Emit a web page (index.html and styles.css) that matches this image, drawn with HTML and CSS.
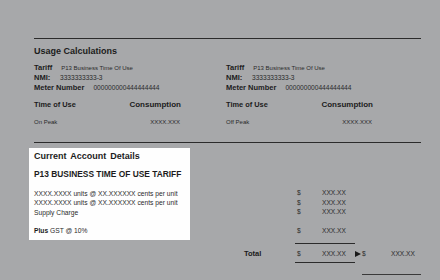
FILE: index.html
```html
<!DOCTYPE html>
<html lang="en">
<head>
<meta charset="utf-8">
<title>Usage Calculations</title>
<link rel="stylesheet" href="styles.css">
</head>
<body>
<div class="page">
  <div class="rule"></div>
  <section class="usage">
    <h2 class="usage-title">Usage Calculations</h2>
    <div class="cols">
      <div class="col">
        <div class="meta-row"><span class="k">Tariff</span><span class="v">P13 Business Time Of Use</span></div>
        <div class="meta-row"><span class="k">NMI:</span><span class="v num">3333333333-3</span></div>
        <div class="meta-row"><span class="k">Meter Number</span><span class="v num">000000000444444444</span></div>
        <div class="tou-head"><span>Time of Use</span><span>Consumption</span></div>
        <div class="tou-row"><span>On Peak</span><span class="num">XXXX.XXX</span></div>
      </div>
      <div class="col">
        <div class="meta-row"><span class="k">Tariff</span><span class="v">P13 Business Time Of Use</span></div>
        <div class="meta-row"><span class="k">NMI:</span><span class="v num">3333333333-3</span></div>
        <div class="meta-row"><span class="k">Meter Number</span><span class="v num">000000000444444444</span></div>
        <div class="tou-head"><span>Time of Use</span><span>Consumption</span></div>
        <div class="tou-row"><span>Off Peak</span><span class="num">XXXX.XXX</span></div>
      </div>
    </div>
  </section>
  <div class="rule"></div>
  <section class="account">
    <div class="card">
      <h3 class="card-title">Current Account Details</h3>
      <div class="card-sub">P13 BUSINESS TIME OF USE TARIFF</div>
      <div class="lines">
        <div>XXXX.XXXX units @ XX.XXXXXX cents per unit</div>
        <div>XXXX.XXXX units @ XX.XXXXXX cents per unit</div>
        <div>Supply Charge</div>
      </div>
      <div class="gst"><b>Plus</b> GST @ 10%</div>
    </div>
    <div class="charges">
      <div class="crow first"><span></span><span>$</span><span>XXX.XX</span></div>
      <div class="crow"><span></span><span>$</span><span>XXX.XX</span></div>
      <div class="crow"><span></span><span>$</span><span>XXX.XX</span></div>
      <div class="crow gap"><span></span><span>$</span><span>XXX.XX</span></div>
      <div class="crow"><span class="sub-line"></span></div>
      <div class="crow total"><span class="total-label">Total</span><span>$</span><span>XXX.XX</span><span class="arrow"><svg width="6" height="6" viewBox="0 0 6 6"><polygon points="0,0 6,3 0,6" fill="#1a1a1a"/></svg></span><span>$</span><span>XXX.XX</span></div>
      <div class="crow"><span class="sub-line below"></span></div>
      <div class="crow"><span class="due-line"></span></div>
    </div>
  </section>
</div>
</body>
</html>
```
FILE: styles.css
```css
* { box-sizing: border-box; }
html, body { margin: 0; padding: 0; }
body {
  background: #a7a8aa;
  width: 440px;
  height: 280px;
  overflow: hidden;
  font-family: "Liberation Sans", Arial, sans-serif;
  color: #1c1c1c;
}
.page {
  padding: 38px 19px 0 34px;
}
.rule {
  border-top: 1px solid #2b2b2b;
  height: 0;
}
.usage-title {
  margin: 6px 0 0;
  font-size: 9px;
  line-height: 12px;
  font-weight: 700;
}
.cols {
  display: grid;
  grid-template-columns: 192px 1fr;
  margin-top: 6px;
}
.col { width: 147px; }
.meta-row {
  display: flex;
  align-items: baseline;
  line-height: 10px;
  height: 10px;
}
.k {
  font-weight: 700;
  font-size: 7.5px;
  min-width: 26px;
  padding-right: 9px;
}
.v {
  font-size: 6px;
  color: #2a2a2a;
}
.v.num { font-size: 6.6px; }
.tou-head {
  display: flex;
  justify-content: space-between;
  margin-top: 7px;
  line-height: 10px;
  font-size: 7.4px;
  font-weight: 700;
}
.tou-head span:last-child { font-size: 8px; }
.tou-row {
  display: flex;
  justify-content: space-between;
  margin-top: 7px;
  line-height: 10px;
  font-size: 6px;
  color: #2a2a2a;
  padding-right: 1px;
}
.usage { padding-bottom: 15px; }
.account {
  display: flex;
  align-items: flex-start;
  margin-top: 5px;
}
.card {
  background: #fefefe;
  width: 161px;
  margin-left: -5px;
  padding: 2px 0 4px 5px;
}
.card-title {
  margin: 0;
  font-size: 9px;
  line-height: 12px;
  font-weight: 700;
  word-spacing: 1.5px;
}
.card-sub {
  margin-top: 6.5px;
  font-size: 8.4px;
  line-height: 11px;
  font-weight: 700;
}
.lines {
  margin-top: 9px;
  font-size: 6.7px;
  line-height: 9.5px;
  color: #2a2a2a;
}
.gst {
  margin-top: 9px;
  font-size: 6.7px;
  line-height: 9.5px;
  color: #2a2a2a;
}
.gst b { color: #1a1a1a; }
.charges {
  margin-left: 54px;
  padding-top: 40px;
  font-size: 6.6px;
  color: #2a2a2a;
}
.crow {
  display: grid;
  grid-template-columns: 53px 25px 33px 7px 29px 30px;
  line-height: 9.5px;
  height: 9.5px;
}
.crow.gap { margin-top: 9px; }
.sub-line {
  grid-column: 2 / 4;
  border-top: 1px solid #2b2b2b;
  margin: 8px 0 0 -2px;
}
.sub-line.below { margin-top: 3px; }
.crow.total {
  margin-top: 4px;
  height: 10px;
  line-height: 10px;
}
.total-label {
  font-weight: 700;
  font-size: 7.5px;
  color: #1a1a1a;
}
.arrow {
  display: flex;
  align-items: center;
  justify-content: flex-start;
}
.due-line {
  grid-column: 5 / 7;
  border-top: 1px solid #3a3a3a;
  margin-top: 6px;
}
```
